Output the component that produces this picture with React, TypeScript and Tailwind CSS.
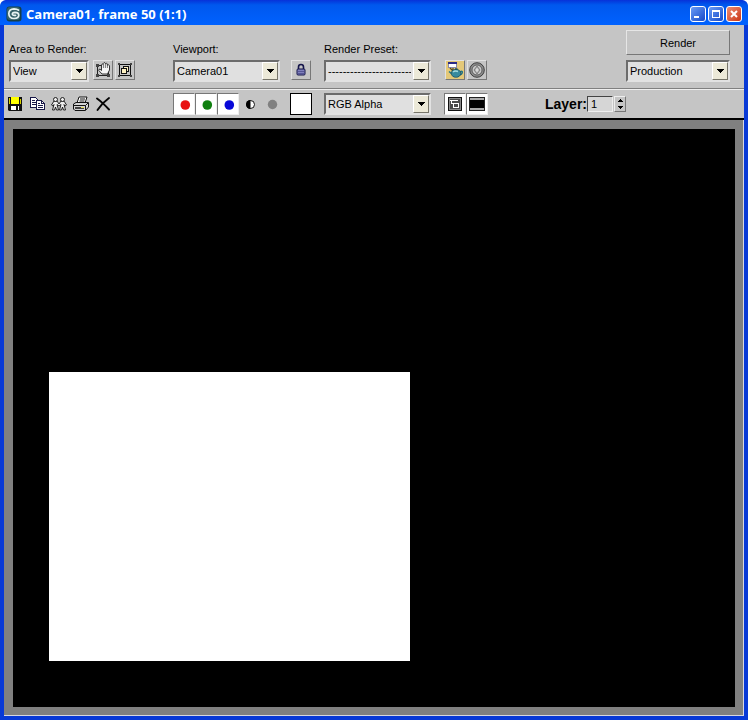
import type { ButtonHTMLAttributes, ReactNode } from "react";
import clsx from "clsx";

interface IconProps {
  children: ReactNode;
  size?: number;
}

const Icon = ({ children, size = 16 }: IconProps) => (
  <svg width={size} height={size} viewBox={`0 0 ${size} ${size}`} className="shrink-0" aria-hidden="true">
    {children}
  </svg>
);

const LogoIcon = () => (
  <Icon>
    <rect x="0.500" y="0.500" width="15" height="15" rx="3" fill="#173f46" />
    <rect x="1" y="1" width="13" height="13" rx="3" fill="#36636a" />
    <path d="M12.500 4.200Q11 2.800 8 2.800Q3 3 2.800 7.500Q3 12.500 8 12.500Q12.800 12.300 12.800 9Q12.500 6.300 9 6.300Q6.300 6.500 6.300 8.300Q6.800 9.800 9.500 9.300" fill="none" stroke="#e8f4f2" strokeWidth="1.700" strokeLinecap="round" />
  </Icon>
);

const HandIcon = () => (
  <Icon>
    <path d="M2.500 3.500H13.500V13.500H2.500Z" fill="none" stroke="#222" />
    <path d="M1 2H4V5H1ZM12 12H15V15H12ZM1 12H4V15H1Z" fill="#444" />
    <path d="M7 12L3.800 8.500Q3.500 7 5 7.200L6.500 8.500V3Q7.300 1 8.300 2.500V1.500Q9.300 -0.500 10.300 1.200V1.700Q11.500 0.300 12.300 2V3.200Q13.800 2 14.500 3.800V8L12.500 12Z" fill="#f5f5f5" stroke="#222" strokeWidth="0.900" />
    <path d="M8.400 2.500V6M10.400 1.500V6M12.400 2.500V6" stroke="#444" strokeWidth="0.700" />
  </Icon>
);

const RegionIcon = () => (
  <Icon>
    <g fill="none" stroke="#111" shapeRendering="crispEdges">
      <path d="M2.500 2.500H13.500V13.500H2.500Z" />
      <path d="M6.500 4.500H11.500V9.500H6.500Z" fill="#fff3c4" />
      <path d="M4.500 6.500H9.500V11.500H4.500Z" fill="#fff3c4" />
    </g>
    <path d="M1 1H3V3H1ZM13 1H15V3H13ZM13 13H15V15H13ZM1 13H3V15H1Z" fill="#444" />
  </Icon>
);

const LockIcon = () => (
  <Icon>
    <path d="M5.500 8V5Q5.500 2.500 8 2.500T10.500 5V8" fill="none" stroke="#15154a" strokeWidth="1.600" />
    <rect x="4" y="7" width="8" height="6" rx="1" fill="#8181bd" stroke="#15154a" />
    <path d="M5 9.500H11M5 11.500H11" stroke="#4b4b8c" strokeWidth="0.800" />
  </Icon>
);

const EnvironmentIcon = () => (
  <Icon>
    <rect x="1.500" y="0.500" width="8" height="5" fill="#fff" stroke="#8a8aa8" />
    <path d="M1 1H10" stroke="#2b2b88" strokeWidth="2" />
    <path d="M3 6L6 9V6" fill="none" stroke="#554a22" strokeWidth="1.200" />
    <path d="M5 12L2 9.500M13 10Q15.500 8.500 15.300 10.500T12.500 13" fill="none" stroke="#247687" strokeWidth="1.500" />
    <ellipse cx="9" cy="11.300" rx="4.800" ry="4" fill="#388a9d" stroke="#174957" strokeWidth="0.700" />
    <path d="M6 10Q8 8.500 11 9.500" fill="none" stroke="#a5dade" strokeWidth="1.500" />
    <path d="M8 7H10.500" stroke="#174957" strokeWidth="1.400" />
  </Icon>
);

const RenderSetupIcon = () => (
  <Icon>
    <circle cx="8" cy="8" r="7.300" fill="#8c8c8c" stroke="#333" strokeWidth="0.900" />
    <circle cx="8" cy="8" r="5" fill="#cdcdcd" stroke="#555" strokeWidth="0.900" />
    <path d="M8 4L11 8L8 12L5 8Z" fill="#aaa" stroke="#666" strokeWidth="0.700" />
    <path d="M8 6V10M6.500 8H9.500" stroke="#eee" strokeWidth="0.900" />
  </Icon>
);

const SaveIcon = () => (
  <Icon>
    <path d="M1 1H15V15H2L1 14Z" fill="#111" />
    <path d="M4 1H12V8H4Z" fill="#ffff00" />
    <path d="M2 2H3V8H2ZM13 3H14V8H13Z" fill="#d8d200" />
    <path d="M4 10H12V14H4Z" fill="#fff" />
    <path d="M9 10H11V14H9Z" fill="#111" />
  </Icon>
);

const CopyIcon = () => (
  <Icon>
    <g fill="#fff" stroke="#181848" shapeRendering="crispEdges">
      <path d="M1.500 1.500H6.500L9.500 4.500V11.500H1.500Z" />
      <path d="M3 4.500H6M3 6.500H7M3 8.500H7" />
      <path d="M7.500 4.500H12.500L15.500 7.500V13.500H7.500Z" />
      <path d="M12.500 4.500V7.500H15.500M9 7.500H11M9 9.500H14M9 11.500H14" fill="none" />
    </g>
  </Icon>
);

const CloneIcon = () => (
  <Icon>
    <g fill="#eee" stroke="#111" strokeWidth="0.900">
      <path d="M3 5L0.500 9L2 10L3 8.500L1.500 14H3.500L4.500 11L5.500 14H7.500L6 8.500L8 10L10 8.500L8.500 14H10.500L11.500 11L12.500 14H14.500L13 8.500L14 10L15.500 9L13 5H10L8 8L6 5Z" />
      <circle cx="4.500" cy="3.500" r="2" />
      <circle cx="11.500" cy="3.500" r="2" />
    </g>
  </Icon>
);

const PrintIcon = () => (
  <Icon>
    <path d="M4 7L6 1H14L12 7" fill="#fff" stroke="#111" />
    <path d="M7 3H12M6.500 5H11.500" stroke="#111" />
    <path d="M0.500 8L3 6.500H15.500V11L12.500 14.500H2L0.500 13Z" fill="#d2d2d2" stroke="#111" />
    <path d="M1 9.500H12.500L15 7M12.500 9.500V14" fill="none" stroke="#111" />
    <path d="M2 12H11" stroke="#111" strokeWidth="1.500" />
    <path d="M8 11H11V12H8Z" fill="#e6dd55" />
  </Icon>
);

const ClearIcon = () => (
  <Icon>
    <path d="M2 2.500Q7 6 14 13.500M14 2Q7 7 2.500 14" fill="none" stroke="#050505" strokeWidth="1.900" strokeLinecap="round" />
  </Icon>
);

const ChannelIcon = ({ color }: { color: string }) => (
  <Icon>
    <circle cx="9.300" cy="9" r="4.800" fill={color} />
  </Icon>
);

const AlphaIcon = () => (
  <Icon>
    <circle cx="8.500" cy="8.500" r="4" fill="#fff" stroke="#111" />
    <path d="M8.500 4A4.500 4.500 0 0 0 8.500 13Z" fill="#000" />
  </Icon>
);

const MonoIcon = () => (
  <Icon>
    <circle cx="8.500" cy="8.500" r="4.700" fill="#808080" />
  </Icon>
);

const OverlayIcon = () => (
  <Icon>
    <g shapeRendering="crispEdges">
      <rect x="1.500" y="1.500" width="13" height="13" fill="#888" stroke="#111" />
      <rect x="3" y="3" width="10" height="10" fill="#4a4a4a" />
      <path d="M3 4.500H11M4.500 4V8M4 7.500H7" stroke="#fff" />
      <rect x="6.500" y="7.500" width="5" height="4" fill="#4a4a4a" stroke="#fff" />
    </g>
  </Icon>
);

const FrameIcon = () => (
  <Icon>
    <g shapeRendering="crispEdges">
      <rect x="0.500" y="1.500" width="15" height="13" fill="#aaa" stroke="#222" />
      <rect x="1" y="4" width="14" height="8" fill="#000" />
    </g>
  </Icon>
);

interface ToolButtonProps extends ButtonHTMLAttributes<HTMLButtonElement> {
  label: string;
  look?: "raised" | "pressed" | "flat";
}

const ToolButton = ({ label, look = "flat", className, children, ...props }: ToolButtonProps) => (
  <button
    type="button"
    aria-label={label}
    className={clsx(
      "flex shrink-0 items-center justify-center",
      look === "raised" && "h-5 w-5 border border-t-[#e2e2e2] border-l-[#e2e2e2] border-r-[#777] border-b-[#777]",
      look === "pressed" &&
        "h-[22px] w-[22px] border border-t-[#777] border-l-[#777] border-r-[#eee] border-b-[#eee] bg-white",
      look === "flat" && "h-[22px] w-[22px]",
      className,
    )}
    {...props}
  >
    {children}
  </button>
);

interface DropDownProps {
  id: string;
  value: string;
  label?: string;
  className: string;
}

const DropDown = ({ id, value, label, className }: DropDownProps) => (
  <div className={clsx("relative h-[22px] shrink-0", className)}>
    <select
      id={id}
      aria-label={label}
      className="h-full w-full appearance-none overflow-hidden border-2 border-t-[#6c6c6c] border-l-[#6c6c6c] border-r-[#e2e2e2] border-b-[#e2e2e2] bg-[#e0e0e0] pr-[18px] pl-[2px] text-[11px] leading-4 outline-none"
    >
      <option>{value}</option>
    </select>
    <span className="pointer-events-none absolute top-[2px] right-[2px] bottom-[2px] flex w-4 items-center justify-center border border-t-white border-l-white border-r-[#77756a] border-b-[#77756a] bg-[#ece9d8]">
      <svg width="7" height="4" viewBox="0 0 7 4" shapeRendering="crispEdges" aria-hidden="true">
        <path d="M0 0H7V1H6V2H5V3H4V4H3V3H2V2H1V1H0Z" fill="#000" />
      </svg>
    </span>
  </div>
);

const captionButton = "flex h-4 w-4 items-center justify-center rounded-[3px] border border-white";

const TitleBar = () => (
  <header className="flex h-[25px] items-center justify-between rounded-t-md bg-linear-to-b from-[#0831d9] via-[#0058ee] via-20% to-[#0062ff] pt-[3px] pr-[6px] pl-[6px]">
    <div className="flex items-center gap-1">
      <LogoIcon />
      <h1 className="font-['Open_Sans',sans-serif] text-[13px] leading-5 font-bold text-white">
        Camera01, frame 50 (1:1)
      </h1>
    </div>
    <div className="flex gap-[2px]">
      <button type="button" aria-label="Minimize" className={clsx(captionButton, "bg-linear-to-br from-[#6b9bf5] to-[#1747c8]")}>
        <svg width="12" height="12" viewBox="0 0 12 12">
          <path d="M2 8H7V10H2Z" fill="#fff" />
        </svg>
      </button>
      <button type="button" aria-label="Maximize" className={clsx(captionButton, "bg-linear-to-br from-[#6b9bf5] to-[#1747c8]")}>
        <svg width="12" height="12" viewBox="0 0 12 12">
          <path d="M2 2H10V10H2ZM3 4V9H9V4Z" fill="#fff" fillRule="evenodd" />
        </svg>
      </button>
      <button type="button" aria-label="Close" className={clsx(captionButton, "bg-linear-to-br from-[#ee8b70] to-[#c9320c]")}>
        <svg width="12" height="12" viewBox="0 0 12 12">
          <path d="M3 3L9 9M9 3L3 9" stroke="#fff" strokeWidth="2" />
        </svg>
      </button>
    </div>
  </header>
);

const RenderToolbar = () => (
  <div className="grid grid-cols-[164px_151px_1fr_118px] border-b border-[#808080] pt-[5px] pb-[6px] pl-[5px]">
    <div className="flex flex-col justify-end gap-[3px]">
      <label htmlFor="area" className="leading-4">
        Area to Render:
      </label>
      <div className="flex gap-[2px]">
        <DropDown id="area" value="View" className="mr-[2px] w-20" />
        <ToolButton look="raised" label="Edit region">
          <HandIcon />
        </ToolButton>
        <ToolButton look="raised" label="Auto region">
          <RegionIcon />
        </ToolButton>
      </div>
    </div>
    <div className="flex flex-col justify-end gap-[3px]">
      <label htmlFor="viewport" className="leading-4">
        Viewport:
      </label>
      <div className="flex gap-[11px]">
        <DropDown id="viewport" value="Camera01" className="w-[107px]" />
        <ToolButton look="raised" label="Lock to viewport">
          <LockIcon />
        </ToolButton>
      </div>
    </div>
    <div className="flex flex-col justify-end gap-[3px]">
      <label htmlFor="preset" className="leading-4">
        Render Preset:
      </label>
      <div className="flex gap-[2px]">
        <DropDown id="preset" value="---------------------------" className="mr-3 w-[107px]" />
        <ToolButton look="raised" label="Render setup" className="bg-[#e4c878]">
          <EnvironmentIcon />
        </ToolButton>
        <ToolButton look="raised" label="Environment and effects">
          <RenderSetupIcon />
        </ToolButton>
      </div>
    </div>
    <div className="flex flex-col gap-[5px] pr-[14px]">
      <button
        type="button"
        className="h-[25px] w-full border border-t-[#e6e6e6] border-l-[#e6e6e6] border-r-[#777] border-b-[#777] leading-4"
      >
        Render
      </button>
      <DropDown id="mode" label="Render mode" value="Production" className="w-full" />
    </div>
  </div>
);

const ChannelToolbar = () => (
  <div className="grid grid-cols-[164px_151px_1fr_118px] items-center border-t border-b-2 border-t-[#eee] border-b-black py-[3px] pl-[5px]">
    <div className="-ml-[5px] flex">
      <ToolButton label="Save image">
        <SaveIcon />
      </ToolButton>
      <ToolButton label="Copy image">
        <CopyIcon />
      </ToolButton>
      <ToolButton label="Clone window">
        <CloneIcon />
      </ToolButton>
      <ToolButton label="Print image">
        <PrintIcon />
      </ToolButton>
      <ToolButton label="Clear">
        <ClearIcon />
      </ToolButton>
    </div>
    <div className="flex">
      <ToolButton look="pressed" label="Red channel">
        <ChannelIcon color="#e81010" />
      </ToolButton>
      <ToolButton look="pressed" label="Green channel">
        <ChannelIcon color="#108010" />
      </ToolButton>
      <ToolButton look="pressed" label="Blue channel">
        <ChannelIcon color="#0808d8" />
      </ToolButton>
      <ToolButton label="Alpha channel">
        <AlphaIcon />
      </ToolButton>
      <ToolButton label="Monochrome">
        <MonoIcon />
      </ToolButton>
      <button type="button" aria-label="Color swatch" className="ml-[7px] h-[22px] w-[22px] border border-black bg-white" />
    </div>
    <div className="flex items-center">
      <DropDown id="channel" label="Channel display" value="RGB Alpha" className="mr-[13px] w-[107px]" />
      <ToolButton look="pressed" label="Toggle overlay">
        <OverlayIcon />
      </ToolButton>
      <ToolButton look="pressed" label="Toggle frame">
        <FrameIcon />
      </ToolButton>
      <div className="ml-auto flex items-center">
        <label htmlFor="layer" className="text-[14px] leading-4 font-bold">
          Layer:
        </label>
        <input
          id="layer"
          type="text"
          defaultValue="1"
          className="h-4 w-[26px] border border-t-[#444] border-l-[#444] border-r-[#eee] border-b-[#eee] bg-[#d6d6d6] pl-[3px] text-[11px] leading-3 outline-none"
        />
        <div className="ml-[1px] flex flex-col border border-t-[#eee] border-l-[#eee] border-r-[#777] border-b-[#777]">
          <button type="button" aria-label="Next layer" className="flex h-[7px] w-[10px] items-center justify-center">
            <svg width="5" height="3" viewBox="0 0 5 3" shapeRendering="crispEdges">
              <path d="M2 0H3V1H4V2H5V3H0V2H1V1H2Z" />
            </svg>
          </button>
          <button type="button" aria-label="Previous layer" className="flex h-[7px] w-[10px] items-center justify-center">
            <svg width="5" height="3" viewBox="0 0 5 3" shapeRendering="crispEdges">
              <path d="M0 0H5V1H4V2H3V3H2V2H1V1H0Z" />
            </svg>
          </button>
        </div>
      </div>
    </div>
  </div>
);

const App = () => {
  return (
    <div className="flex min-h-screen flex-col rounded-t-lg bg-[#0839d6] font-['Liberation_Sans',Arial,sans-serif] text-[11px] text-black">
      <TitleBar />
      <main className="mx-1 mb-1 flex flex-1 flex-col bg-[#c5c5c5]">
        <RenderToolbar />
        <ChannelToolbar />
        <div className="flex flex-1 border-r border-b border-[#d8d8e0] bg-[#808080] pt-[9px] pr-2 pb-2 pl-[9px]">
          <div className="flex flex-1 items-end bg-black pb-[46px]">
            <div className="ml-[5%] aspect-5/4 w-1/2 bg-white" />
          </div>
        </div>
      </main>
    </div>
  );
};

export default App;
